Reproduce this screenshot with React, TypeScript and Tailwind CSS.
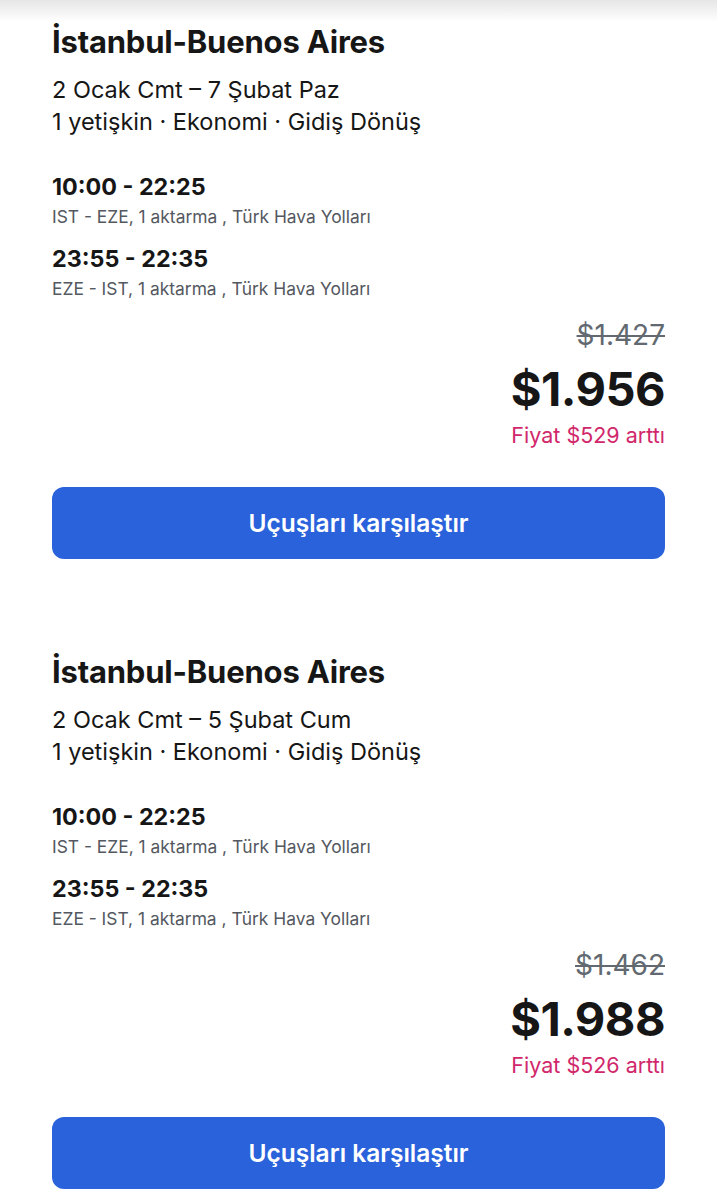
import React from 'react';

interface Leg {
  times: string;
  detail: string;
}

interface Trip {
  title: string;
  dates: string;
  info: string;
  legs: Leg[];
  oldPrice: string;
  price: string;
  change: string;
}

const trips: Trip[] = [
  {
    title: 'İstanbul-Buenos Aires',
    dates: '2 Ocak Cmt – 7 Şubat Paz',
    info: '1 yetişkin · Ekonomi · Gidiş Dönüş',
    legs: [
      { times: '10:00 - 22:25', detail: 'IST - EZE, 1 aktarma , Türk Hava Yolları' },
      { times: '23:55 - 22:35', detail: 'EZE - IST, 1 aktarma , Türk Hava Yolları' },
    ],
    oldPrice: '$1.427',
    price: '$1.956',
    change: 'Fiyat $529 arttı',
  },
  {
    title: 'İstanbul-Buenos Aires',
    dates: '2 Ocak Cmt – 5 Şubat Cum',
    info: '1 yetişkin · Ekonomi · Gidiş Dönüş',
    legs: [
      { times: '10:00 - 22:25', detail: 'IST - EZE, 1 aktarma , Türk Hava Yolları' },
      { times: '23:55 - 22:35', detail: 'EZE - IST, 1 aktarma , Türk Hava Yolları' },
    ],
    oldPrice: '$1.462',
    price: '$1.988',
    change: 'Fiyat $526 arttı',
  },
];

function TripCard({ trip }: { trip: Trip }) {
  return (
    <div className="flex flex-col">
      <h2 className="text-[31px] leading-[34px] font-bold text-[#161616] tracking-[-0.2px]">{trip.title}</h2>
      <p className="mt-[15px] text-[23.5px] leading-[32px] text-[#161616]">{trip.dates}</p>
      <p className="text-[23.5px] leading-[32px] text-[#161616]">{trip.info}</p>

      <div className="mt-[34px] flex flex-col gap-[16px]">
        {trip.legs.map((leg, i) => (
          <div key={i} className="flex flex-col gap-[4px]">
            <span className="text-[23.3px] leading-[30px] font-bold text-[#161616]">{leg.times}</span>
            <span className="text-[17.4px] leading-[22px] text-[#545860]">{leg.detail}</span>
          </div>
        ))}
      </div>

      <div className="mt-[19px] flex flex-col items-end">
        <span className="text-[28px] leading-[32px] text-[#626971] line-through">{trip.oldPrice}</span>
        <span className="mt-[12px] text-[47px] leading-[52px] font-bold text-[#161616] tracking-[-0.5px]">{trip.price}</span>
        <span className="mt-[7px] text-[21.5px] leading-[26px] text-[#d1276b]">{trip.change}</span>
      </div>

      <button className="mt-[39px] h-[72px] w-full rounded-[12px] bg-[#2a62dc] text-white text-[24.5px] font-semibold">
        Uçuşları karşılaştır
      </button>
    </div>
  );
}

export default function App() {
  return (
    <div
      className="relative min-h-[1200px] w-[717px] bg-white overflow-hidden"
      style={{ fontFamily: 'Inter, "Noto Sans", sans-serif' }}
    >
      <div className="absolute inset-x-0 top-0 h-[22px] bg-gradient-to-b from-[#e6e6e6] to-white" />
      <div className="relative flex flex-col gap-[96px] px-[52px] pt-[25px]">
        {trips.map((t, i) => (
          <TripCard key={i} trip={t} />
        ))}
      </div>
    </div>
  );
}
